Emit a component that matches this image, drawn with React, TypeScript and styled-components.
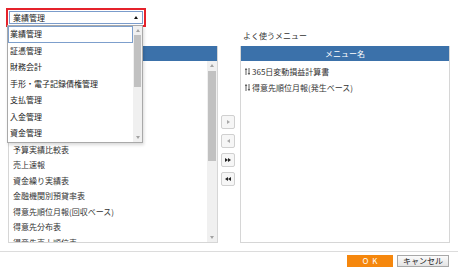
import React from 'react';
import styled, { createGlobalStyle } from 'styled-components';

const Global = createGlobalStyle`
  html, body { margin: 0; padding: 0; background: #fff; }
  body {
    font-family: "Noto Sans CJK JP", "Noto Sans", sans-serif;
    font-size: 8px;
    color: #333;
  }
  * { box-sizing: border-box; }
`;

const Page = styled.div`
  width: 458px;
  height: 270px;
  padding-top: 8px;
  display: flex;
  flex-direction: column;
  position: relative;
  overflow: hidden;
`;

const TopBar = styled.div`
  height: 19px;
  padding-left: 6px;
  display: flex;
  position: relative;
  z-index: 2;
`;

const Highlight = styled.div`
  position: relative;
  border: 2px solid #e5222b;
  padding: 1px;
`;

const SelectBox = styled.div`
  width: 134px;
  height: 13px;
  border: 1px solid #7b9ccb;
  background: #fff;
  display: flex;
  align-items: center;
  justify-content: space-between;
  padding: 0 4px 0 3px;
  line-height: 11px;
  color: #222;
`;

const Caret = styled.span<{ $down?: boolean; $color?: string }>`
  width: 0;
  height: 0;
  border-left: 2px solid transparent;
  border-right: 2px solid transparent;
  ${(p) => (p.$down ? 'border-top' : 'border-bottom')}: 3px solid ${(p) => p.$color || '#111'};
`;

const Dropdown = styled.div`
  position: absolute;
  top: 100%;
  left: -1px;
  width: 136px;
  height: 118px;
  border: 1px solid #a9a9a9;
  background: #fff;
  display: flex;
  box-shadow: 1px 2px 3px rgba(0, 0, 0, 0.15);
`;

const Options = styled.div`
  flex: 1;
  overflow: hidden;
`;

const Option = styled.div<{ $selected?: boolean }>`
  height: 16.5px;
  line-height: 16.5px;
  padding-left: 2px;
  white-space: nowrap;
  color: #222;
  box-shadow: ${(p) => (p.$selected ? 'inset 0 0 0 1px #7d9fcc' : 'none')};
`;

const ScrollBar = styled.div<{ $width: number }>`
  width: ${(p) => p.$width}px;
  flex: none;
  background: #f0f0f0;
  display: flex;
  flex-direction: column;
  align-items: stretch;
`;

const ScrollArrow = styled.div`
  height: 9px;
  flex: none;
  display: flex;
  align-items: center;
  justify-content: center;
`;

const ScrollThumb = styled.div<{ $size: number }>`
  height: ${(p) => p.$size}px;
  flex: none;
  margin: 0 1px;
  background: #c1c1c1;
`;

const ScrollRest = styled.div`
  flex: 1;
`;

const Main = styled.div`
  display: grid;
  grid-template-columns: 210px 22px 210px;
  grid-template-rows: 12px 197px;
  row-gap: 4px;
  padding-left: 8px;
  margin-top: 3px;
`;

const Title = styled.div`
  line-height: 12px;
  padding-left: 3px;
  color: #333;
`;

const Panel = styled.div`
  border: 1px solid #d6d6d6;
  border-top: none;
  display: flex;
  flex-direction: column;
  overflow: hidden;
`;

const PanelHeader = styled.div`
  height: 15px;
  flex: none;
  margin: 0 -1px;
  background: #3b71aa;
  color: #fff;
  text-align: center;
  line-height: 15px;
`;

const PanelBody = styled.div`
  flex: 1;
  display: flex;
  min-height: 0;
`;

const List = styled.div`
  flex: 1;
  padding-top: 3px;
  overflow: hidden;
`;

const Row = styled.div`
  height: 15.5px;
  line-height: 15.5px;
  padding-left: 4px;
  white-space: nowrap;
  display: flex;
  align-items: center;
  gap: 2px;
  color: #333;
`;

const Middle = styled.div`
  padding-top: 69px;
  padding-left: 3px;
  display: flex;
  flex-direction: column;
  gap: 5px;
`;

const MoveButton = styled.div`
  width: 14px;
  height: 14px;
  border: 1px solid #d0d0d0;
  border-radius: 2px;
  background: #f6f6f6;
  display: flex;
  align-items: center;
  justify-content: center;
`;

const Tri = styled.span<{ $dir: 'left' | 'right'; $color: string }>`
  width: 0;
  height: 0;
  border-top: 2px solid transparent;
  border-bottom: 2px solid transparent;
  ${(p) => (p.$dir === 'right' ? 'border-left' : 'border-right')}: 3px solid ${(p) => p.$color};
`;

const Footer = styled.div`
  margin-top: 8px;
  border-top: 1px solid #dcdcdc;
  padding: 3px 9px 0 0;
  display: flex;
  justify-content: flex-end;
  gap: 4px;
`;

const OkButton = styled.button`
  width: 46px;
  height: 12px;
  border: none;
  padding: 0 0 0 4px;
  background: #f5870d;
  color: #fff;
  font: inherit;
  font-size: 8px;
  line-height: 12px;
  letter-spacing: 4px;
`;

const CancelButton = styled.button`
  width: 52px;
  height: 12px;
  border: 1px solid #a8a8a8;
  padding: 0;
  background: linear-gradient(#fbfbfb, #e4e4e4);
  color: #222;
  font: inherit;
  font-size: 8px;
  line-height: 10px;
`;

const SortIcon = () => (
  <svg width="5" height="7" viewBox="0 0 5 7" style={{ flex: 'none' }}>
    <path d="M1 7V0.8M0.1 1.9L1 0.6L1.9 1.9" stroke="#333" strokeWidth="0.8" fill="none" />
    <path d="M4 0V6.2M3.1 5.1L4 6.4L4.9 5.1" stroke="#333" strokeWidth="0.8" fill="none" />
  </svg>
);

const dropdownItems = [
  '業績管理',
  '証憑管理',
  '財務会計',
  '手形・電子記録債権管理',
  '支払管理',
  '入金管理',
  '資金管理',
  '給与管理',
  'システム管理',
];

const menuItems = [
  '月次推移表',
  '部門別損益計算書',
  '損益計算書',
  '貸借対照表',
  '予算実績推移表',
  '予算実績比較表',
  '売上速報',
  '資金繰り実績表',
  '金融機関別預貸率表',
  '得意先順位月報(回収ベース)',
  '得意先分布表',
  '得意先売上順位表',
  '得意先別売上推移表',
];

const favorites = ['365日変動損益計算書', '得意先順位月報(発生ベース)'];

const VScroll = ({ width, offset, size }: { width: number; offset: number; size: number }) => (
  <ScrollBar $width={width}>
    <ScrollArrow>
      <Caret $color="#a3a3a3" />
    </ScrollArrow>
    {offset > 0 && <ScrollRest style={{ flex: 'none', height: offset }} />}
    <ScrollThumb $size={size} />
    <ScrollRest />
    <ScrollArrow>
      <Caret $down $color="#a3a3a3" />
    </ScrollArrow>
  </ScrollBar>
);

export default function App() {
  return (
    <>
      <Global />
      <Page>
        <TopBar>
          <Highlight>
            <SelectBox>
              <span>業績管理</span>
              <Caret />
            </SelectBox>
            <Dropdown>
              <Options>
                {dropdownItems.map((item, i) => (
                  <Option key={item} $selected={i === 0}>
                    {item}
                  </Option>
                ))}
              </Options>
              <VScroll width={9} offset={0} size={52} />
            </Dropdown>
          </Highlight>
        </TopBar>
        <Main>
          <Title>メニュー一覧</Title>
          <div />
          <Title>よく使うメニュー</Title>
          <Panel>
            <PanelHeader>メニュー名</PanelHeader>
            <PanelBody>
              <List>
                {menuItems.map((item) => (
                  <Row key={item}>{item}</Row>
                ))}
              </List>
              <VScroll width={10} offset={1} size={90} />
            </PanelBody>
          </Panel>
          <Middle>
            <MoveButton>
              <Tri $dir="right" $color="#a8a8a8" />
            </MoveButton>
            <MoveButton>
              <Tri $dir="left" $color="#a8a8a8" />
            </MoveButton>
            <MoveButton>
              <Tri $dir="right" $color="#222" />
              <Tri $dir="right" $color="#222" />
            </MoveButton>
            <MoveButton>
              <Tri $dir="left" $color="#222" />
              <Tri $dir="left" $color="#222" />
            </MoveButton>
          </Middle>
          <Panel>
            <PanelHeader>メニュー名</PanelHeader>
            <PanelBody>
              <List>
                {favorites.map((item) => (
                  <Row key={item}>
                    <SortIcon />
                    {item}
                  </Row>
                ))}
              </List>
            </PanelBody>
          </Panel>
        </Main>
        <Footer>
          <OkButton>OK</OkButton>
          <CancelButton>キャンセル</CancelButton>
        </Footer>
      </Page>
    </>
  );
}
